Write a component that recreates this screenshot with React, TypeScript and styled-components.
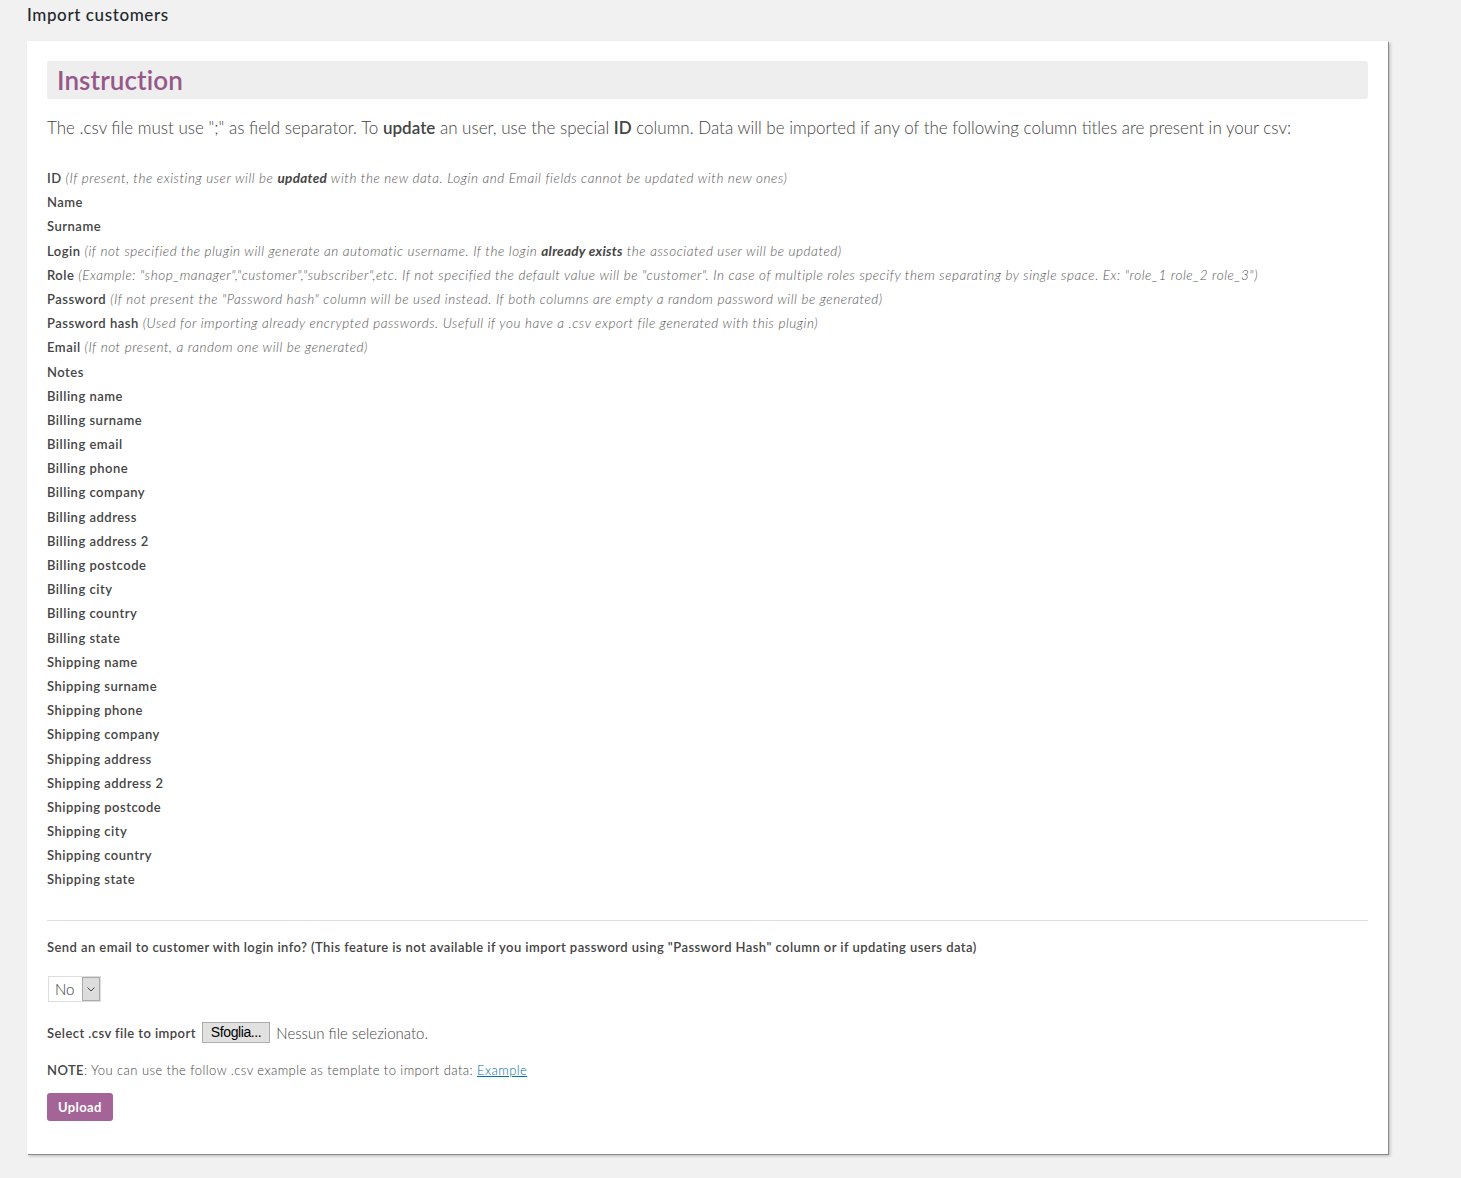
import React from 'react';
import styled, { createGlobalStyle } from 'styled-components';

const GlobalStyle = createGlobalStyle`
  html, body {
    margin: 0;
    padding: 0;
    background: #f1f1f1;
  }
  body {
    font-family: Lato, "Open Sans", sans-serif;
    font-size: 13px;
    color: #444;
  }
`;

type Column = {
  label: string;
  note?: React.ReactNode;
};

const COLUMNS: Column[] = [
  {
    label: 'ID',
    note: (
      <>
        (If present, the existing user will be <b>updated</b> with the new data. Login and Email fields cannot be
        updated with new ones)
      </>
    ),
  },
  { label: 'Name' },
  { label: 'Surname' },
  {
    label: 'Login',
    note: (
      <>
        (if not specified the plugin will generate an automatic username. If the login <b>already exists</b> the
        associated user will be updated)
      </>
    ),
  },
  {
    label: 'Role',
    note: (
      <>
        (Example: "shop_manager","customer","subscriber",etc. If not specified the default value will be "customer".
        In case of multiple roles specify them separating by single space. Ex: "role_1 role_2 role_3")
      </>
    ),
  },
  {
    label: 'Password',
    note: (
      <>
        (If not present the "Password hash" column will be used instead. If both columns are empty a random password
        will be generated)
      </>
    ),
  },
  {
    label: 'Password hash',
    note: (
      <>(Used for importing already encrypted passwords. Usefull if you have a .csv export file generated with this plugin)</>
    ),
  },
  { label: 'Email', note: <>(If not present, a random one will be generated)</> },
  { label: 'Notes' },
  { label: 'Billing name' },
  { label: 'Billing surname' },
  { label: 'Billing email' },
  { label: 'Billing phone' },
  { label: 'Billing company' },
  { label: 'Billing address' },
  { label: 'Billing address 2' },
  { label: 'Billing postcode' },
  { label: 'Billing city' },
  { label: 'Billing country' },
  { label: 'Billing state' },
  { label: 'Shipping name' },
  { label: 'Shipping surname' },
  { label: 'Shipping phone' },
  { label: 'Shipping company' },
  { label: 'Shipping address' },
  { label: 'Shipping address 2' },
  { label: 'Shipping postcode' },
  { label: 'Shipping city' },
  { label: 'Shipping country' },
  { label: 'Shipping state' },
];

const App = () => (
  <>
    <GlobalStyle />
    <Page>
      <PageTitle>Import customers</PageTitle>
      <Panel>
        <SectionHeader>Instruction</SectionHeader>
        <Intro>
          The .csv file must use ";" as field separator. To <b>update</b> an user, use the special <b>ID</b> column.
          Data will be imported if any of the following column titles are present in your csv:
        </Intro>
        <ColumnList>
          {COLUMNS.map((col) => (
            <ColumnItem key={col.label}>
              <ColumnLabel>{col.label}</ColumnLabel>
              {col.note && <ColumnNote> {col.note}</ColumnNote>}
            </ColumnItem>
          ))}
        </ColumnList>
        <Divider />
        <FieldLabel>
          Send an email to customer with login info? (This feature is not available if you import password using
          "Password Hash" column or if updating users data)
        </FieldLabel>
        <SelectBox>
          <SelectValue>No</SelectValue>
          <SelectArrow>
            <svg width="8" height="5" viewBox="0 0 8 5">
              <path d="M0.5 0.5 L4 4 L7.5 0.5" fill="none" stroke="#444" strokeWidth="1" />
            </svg>
          </SelectArrow>
        </SelectBox>
        <FileRow>
          <FieldLabel as="span">Select .csv file to import</FieldLabel>
          <BrowseButton>Sfoglia...</BrowseButton>
          <FileStatus>Nessun file selezionato.</FileStatus>
        </FileRow>
        <Note>
          <b>NOTE</b>: You can use the follow .csv example as template to import data: <ExampleLink>Example</ExampleLink>
        </Note>
        <UploadButton>Upload</UploadButton>
      </Panel>
    </Page>
  </>
);

const Page = styled.div`
  padding: 0 73px 24px 27px;
`;

const PageTitle = styled.h1`
  margin: 0;
  padding: 4px 0 0;
  height: 37px;
  font-size: 17px;
  font-weight: 500;
  letter-spacing: 0.6px;
  line-height: 22px;
  color: #23282d;
`;

const Panel = styled.div`
  background: #fff;
  padding: 20px 20px 33px;
  box-shadow: 1px 1px 0 #8a8a8a, 2px 2px 3px rgba(0, 0, 0, 0.25);
`;

const SectionHeader = styled.h2`
  margin: 0;
  height: 38px;
  padding: 0 10px;
  box-sizing: border-box;
  background: #eeeeee;
  border-radius: 3px;
  color: #96588a;
  font-size: 26px;
  font-weight: 600;
  letter-spacing: 0.1px;
  line-height: 38px;
`;

const Intro = styled.p`
  margin: 17px 0 30px;
  font-size: 17px;
  font-weight: 300;
  line-height: 23px;
  color: #444;

  b {
    font-weight: 600;
  }
`;

const ColumnList = styled.ul`
  list-style: none;
  margin: 0 0 32px;
  padding: 0;
`;

const ColumnItem = styled.li`
  margin: 0 0 6.2px;
  font-size: 13px;
  line-height: 18px;
`;

const ColumnLabel = styled.span`
  font-weight: 600;
  letter-spacing: 0.5px;
  color: #444;
`;

const ColumnNote = styled.span`
  font-style: italic;
  font-weight: 300;
  font-size: 13.5px;
  letter-spacing: 0.55px;
  color: #555;

  b {
    font-weight: 700;
    letter-spacing: 0.3px;
    color: #444;
  }
`;

const Divider = styled.hr`
  margin: 0 0 17px;
  border: 0;
  border-top: 1px solid #dddddd;
`;

const FieldLabel = styled.p`
  margin: 0;
  font-size: 13px;
  font-weight: 600;
  letter-spacing: 0.43px;
  line-height: 18px;
  color: #444;
`;

const SelectBox = styled.div`
  margin: 20px 0 20px 1px;
  display: flex;
  align-items: stretch;
  width: 53px;
  height: 26px;
  box-sizing: border-box;
  border: 1px solid #dddddd;
  background: #fff;
`;

const SelectValue = styled.span`
  flex: 1;
  padding-left: 6px;
  font-size: 15px;
  font-weight: 300;
  line-height: 24px;
  color: #333;
`;

const SelectArrow = styled.span`
  width: 16px;
  display: flex;
  align-items: center;
  justify-content: center;
  background: #dddddd;
  border: 1px solid #aaaaaa;
`;

const FileRow = styled.div`
  display: flex;
  align-items: center;
  gap: 6px;
  margin-bottom: 18px;
`;

const BrowseButton = styled.span`
  box-sizing: border-box;
  height: 21px;
  padding: 0 8px;
  border: 1px solid #adadad;
  background: #e1e1e1;
  font-family: "Liberation Sans", Arial, sans-serif;
  font-size: 14px;
  letter-spacing: -0.4px;
  line-height: 19px;
  color: #000;
`;

const FileStatus = styled.span`
  font-size: 15px;
  font-weight: 300;
  color: #444;
`;

const Note = styled.p`
  margin: 0 0 14px;
  font-size: 13px;
  font-weight: 300;
  letter-spacing: 0.43px;
  line-height: 18px;

  b {
    font-weight: 600;
  }
`;

const ExampleLink = styled.a`
  color: #0073aa;
  text-decoration: underline;
  cursor: pointer;
`;

const UploadButton = styled.button`
  height: 28px;
  padding: 0 11px;
  border: 0;
  border-radius: 3px;
  background: #a46497;
  color: #fff;
  font-family: inherit;
  font-size: 13px;
  font-weight: 700;
  letter-spacing: 0.4px;
  cursor: pointer;
`;

export default App;
